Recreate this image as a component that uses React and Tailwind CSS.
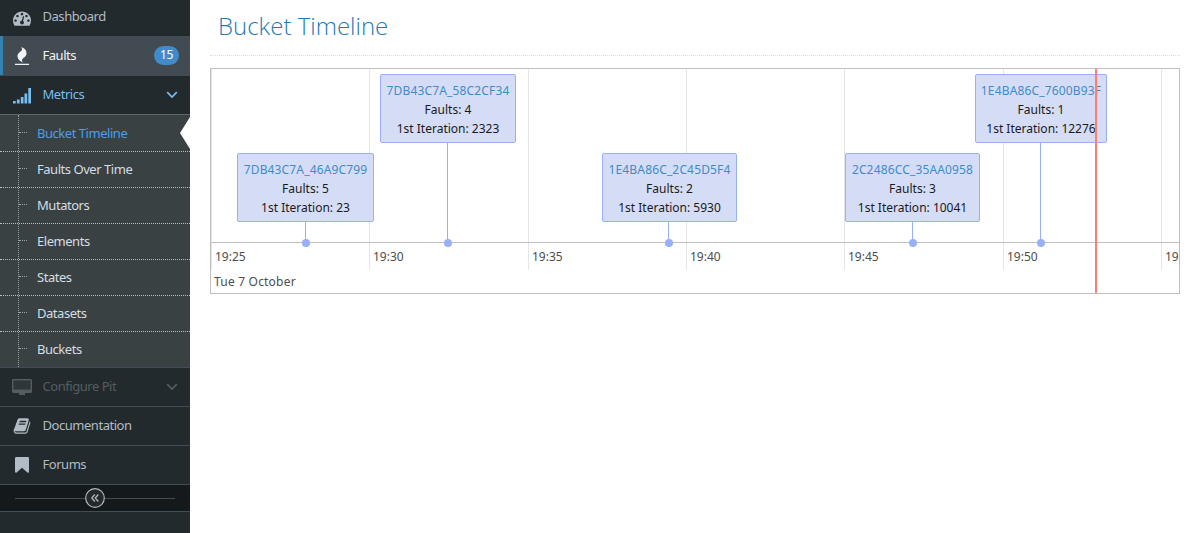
import React from "react";

const DASHBOARD =
  "M384 1152q0-53-37.5-90.5t-90.5-37.5-90.5 37.5-37.5 90.5 37.5 90.5 90.5 37.5 90.5-37.5 37.5-90.5zm192-448q0-53-37.5-90.5t-90.5-37.5-90.5 37.5-37.5 90.5 37.5 90.5 90.5 37.5 90.5-37.5 37.5-90.5zm428 481l101-382q6-26-7.5-48.5t-38.5-29.5-48 6.5-30 39.5l-101 382q-60 5-107 43.5t-63 98.5q-20 77 20 146t117 89 146-20 89-117q16-60-6-117t-72-91zm660-33q0-53-37.5-90.5t-90.5-37.5-90.5 37.5-37.5 90.5 37.5 90.5 90.5 37.5 90.5-37.5 37.5-90.5zm-640-640q0-53-37.5-90.5t-90.5-37.5-90.5 37.5-37.5 90.5 37.5 90.5 90.5 37.5 90.5-37.5 37.5-90.5zm448 192q0-53-37.5-90.5t-90.5-37.5-90.5 37.5-37.5 90.5 37.5 90.5 90.5 37.5 90.5-37.5 37.5-90.5zm320 448q0 261-141 483-19 29-54 29h-1402q-35 0-54-29-141-221-141-483 0-182 71-348t191-286 286-191 348-71 348 71 286 191 191 286 71 348z";
const FIRE =
  "M1600 1696v64q0 13-9.5 22.5t-22.5 9.5h-1344q-13 0-22.5-9.5t-9.5-22.5v-64q0-13 9.5-22.5t22.5-9.5h1344q13 0 22.5 9.5t9.5 22.5zm-256-1056q0 78-24.5 144t-64 112.5-87.5 88-96 77.5-87.5 72-64 81.5-24.5 96.5q0 96 67 224l-4-1 1 1q-90-41-160-83t-138.5-100-113.5-122.5-72.5-150.5-27.5-184q0-78 24.5-144t64-112.5 87.5-88 96-77.5 87.5-72 64-81.5 24.5-96.5q0-94-66-224l3 1-1-1q90 41 160 83t138.5 100 113.5 122.5 72.5 150.5 27.5 184z";
const BOOK =
  "M1703 478q40 57 18 129l-275 906q-19 64-76.5 107.5t-122.5 43.5h-923q-77 0-148.5-53.5t-99.5-131.5q-24-67-2-127 0-4 3-27t4-37q1-8-3-21.5t-3-19.5q2-11 8-21t16.5-23.5 16.5-23.5q23-38 45-91.5t30-91.5q3-10 .5-30t-.5-28q3-11 17-28t17-23q21-36 42-92t25-90q1-9-2.5-32t.5-28q4-13 22-30.5t22-22.5q19-26 42.5-84.5t27.5-96.5q1-8-3-25.5t-2-26.5q2-8 9-18t18-23 17-21q8-12 16.5-30.5t15-35 16-36 19.5-32 26.5-23.5 36-11.5 47.5 5.5l-1 3q38-9 51-9h761q74 0 114 56t18 130l-274 906q-36 119-71.5 153.5t-128.5 34.5h-869q-27 0-38 15-11 16-1 43 24 70 144 70h923q29 0 56-15.5t35-41.5l300-987q7-22 5-57 38 15 59 43zm-1064 2q-4 13 2 22.5t20 9.5h608q13 0 25.5-9.5t16.5-22.5l21-64q4-13-2-22.5t-20-9.5h-608q-13 0-25.5 9.5t-16.5 22.5zm-83 256q-4 13 2 22.5t20 9.5h608q13 0 25.5-9.5t16.5-22.5l21-64q4-13-2-22.5t-20-9.5h-608q-13 0-25.5 9.5t-16.5 22.5z";

function Glyph({ d }) {
  return (
    <svg viewBox="0 0 1792 1792" className="h-[18px] w-[18px]" fill="currentColor">
      <path d={d} />
    </svg>
  );
}

function Signal() {
  return (
    <svg viewBox="0 0 20 18" className="h-[18px] w-5" fill="currentColor">
      <path d="M1 15h2.700v2.500h-2.700zM4.900 13.500h2.700v4h-2.700zM8.800 11h2.700v6.500h-2.700zM12.500 7.500h2.700v10h-2.700zM16.300 2h2.700v15.500h-2.700z" />
    </svg>
  );
}

function Desktop() {
  return (
    <svg viewBox="0 0 20 18" className="h-[18px] w-5" fill="currentColor">
      <path
        fillRule="evenodd"
        d="M1.500 1h17a1.500 1.500 0 0 1 1.500 1.500v11a1.500 1.500 0 0 1-1.500 1.500H13v1.500q0 .5-.5.5h-5q-.5 0-.5-.5V15H1.500A1.500 1.500 0 0 1 0 13.500v-11A1.500 1.500 0 0 1 1.500 1zM1.500 2.500v9h17v-9z"
      />
      <path d="M1.500 2.500h17v9h-17z" fillOpacity="0.250" />
    </svg>
  );
}

function Bookmark() {
  return (
    <svg viewBox="0 0 14 16" className="h-4 w-[14px]" fill="currentColor">
      <path d="M1.300 0h11.400q1.300 0 1.300 1.300v13.400q0 1.300-1.300 1.100L7 10.800 1.300 15.800Q0 16 0 14.700V1.300Q0 0 1.300 0z" />
    </svg>
  );
}

function Chevron() {
  return (
    <svg viewBox="0 0 12 8" className="h-2 w-3" fill="none" stroke="currentColor" strokeWidth="1.700">
      <path d="M1.200 1.200 6 6l4.800-4.800" />
    </svg>
  );
}

function Item({ icon, label, tone, right, height = "h-[39px]", border = "border-b border-[#414e55]", pad = "pb-0.5" }) {
  return (
    <a className={`flex w-full items-center ${height} ${border} ${tone}`}>
      <span className="flex w-11 shrink-0 justify-center">{icon}</span>
      <span className={`-ml-[1.5px] grow ${pad}`}>{label}</span>
      {right}
    </a>
  );
}

const metrics = ["Bucket Timeline", "Faults Over Time", "Mutators", "Elements", "States", "Datasets", "Buckets"];

function Sidebar() {
  return (
    <nav className="flex h-[533px] w-[190px] shrink-0 flex-col bg-[#222a2d] text-[13px] leading-5 tracking-[-0.46px]">
      <Item height="h-9" border="" pad="pb-1" tone="text-[#b2bcc4]" icon={<Glyph d={DASHBOARD} />} label="Dashboard" />
      <div className="flex h-10 bg-[#434b52]">
        <div className="h-[39px] w-[3px] shrink-0 bg-[#3382af]" />
        <div className="-ml-[3px] flex grow">
          <Item
            border=""
            tone="text-[#f0f3f5]"
            icon={<Glyph d={FIRE} />}
            label="Faults"
            right={
              <span className="mr-[11px] h-[19px] w-[25px] rounded-full bg-[#428bca] text-center text-xs leading-[18px] text-white">
                15
              </span>
            }
          />
        </div>
      </div>
      <Item
        tone="text-[#76bff0]"
        border="border-b border-[#5b6668]"
        icon={<Signal />}
        label="Metrics"
        right={<span className="mr-3"><Chevron /></span>}
      />
      <div className="flex h-[252px] flex-col bg-[#3a4143]">
        {metrics.map((name, i) => (
          <a
            key={name}
            className={`flex items-center ${i === 0 ? "h-[37px]" : i === 6 ? "h-[35px]" : "h-9"} ${
              i < 6 ? "border-b border-dotted border-[#b4bfc1]" : ""
            } ${i === 0 ? "text-[#4f9ee0]" : "text-[#d5dde2]"}`}
          >
            <span className="ml-[18px] h-full w-px border-l border-dotted border-[#98a3a6]" />
            <span className="mb-0.5 w-2 border-t border-dotted border-[#98a3a6]" />
            <span className={`ml-2.5 grow ${i === 0 ? "" : i === 6 ? "pb-0.5" : "pb-px"}`}>{name}</span>
            {i === 0 && (
              <svg viewBox="0 0 10 32" className="h-8 w-2.5" fill="#fff">
                <path d="M10 0v32L0 16z" />
              </svg>
            )}
          </a>
        ))}
      </div>
      <Item
        height="h-10"
        border="border-y border-[#414e55]"
        tone="text-[#555d61]"
        icon={<Desktop />}
        label="Configure Pit"
        right={<span className="mr-3"><Chevron /></span>}
      />
      <Item tone="text-[#b2bcc4]" icon={<Glyph d={BOOK} />} label="Documentation" />
      <Item tone="text-[#b2bcc4]" icon={<Bookmark />} label="Forums" />
      <div className="flex h-[27px] items-center border-b border-[#414e55] bg-[#141a1c] px-[15px]">
        <div className="h-px grow bg-[#414e55]" />
        <svg viewBox="0 0 20 20" className="h-5 w-5" fill="none" stroke="#b2b8bc">
          <circle cx="10" cy="10" r="9.300" fill="#222a2d" strokeWidth="1.200" />
          <path d="M9.800 6.500 6.800 10l3 3.500M13.300 6.500 10.300 10l3 3.500" strokeWidth="1.300" />
        </svg>
        <div className="h-px grow bg-[#414e55]" />
      </div>
    </nav>
  );
}

const ticks = [
  { x: 0, t: "19:25" },
  { x: 158, t: "19:30" },
  { x: 317, t: "19:35" },
  { x: 475, t: "19:40" },
  { x: 633, t: "19:45" },
  { x: 792, t: "19:50" },
  { x: 950, t: "19" },
];

const events = [
  { id: "7DB43C7A_46A9C799", n: 5, it: 23, left: 26, top: 84, w: 137, dot: 95 },
  { id: "7DB43C7A_58C2CF34", n: 4, it: 2323, left: 169, top: 5, w: 136, dot: 237 },
  { id: "1E4BA86C_2C45D5F4", n: 2, it: 5930, left: 391, top: 84, w: 135, dot: 458 },
  { id: "2C2486CC_35AA0958", n: 3, it: 10041, left: 634, top: 84, w: 135, dot: 702 },
  { id: "1E4BA86C_7600B93F", n: 1, it: 12276, left: 764, top: 5, w: 132, dot: 830 },
];

function Timeline() {
  return (
    <div className="relative h-[226px] w-[970px] overflow-hidden border border-[#bfbfbf] text-xs leading-[19px] text-[#4d4d4d]">
      {ticks.map(({ x, t }) => (
        <div key={t} className="absolute top-0 h-[201px] border-l border-[#e5e5e5] pt-[178px] pl-[3px]" style={{ left: x }}>
          {t}
        </div>
      ))}
      <div className="absolute top-[203px] left-[3px] tracking-[0.2px]">Tue 7 October</div>
      <div className="absolute top-[173px] left-0 h-px w-full bg-[#bfbfbf]" />
      {events.map((e) => (
        <React.Fragment key={e.id}>
          <div className="absolute w-px bg-[#97b0f8]" style={{ left: e.dot - 1, top: e.top + 69, height: 104 - e.top }} />
          <div className="absolute top-[170px] h-2 w-2 rounded-full bg-[#97b0f8]" style={{ left: e.dot - 4 }} />
          <div
            className="absolute flex h-[69px] flex-col items-center rounded-[2px] border border-[#97b0f8] bg-[#d5ddf6] pt-[6px] whitespace-nowrap text-[#1a1a1a]"
            style={{ left: e.left, top: e.top, width: e.w }}
          >
            <div className="tracking-[0.15px] text-[#428bca]">{e.id}</div>
            <div>Faults: {e.n}</div>
            <div>1st Iteration: {e.it}</div>
          </div>
        </React.Fragment>
      ))}
      <div className="absolute top-0 left-[884px] h-full w-0.5 bg-[#ff7f6e]" />
    </div>
  );
}

export default function App() {
  return (
    <div className="flex h-[533px] w-[1200px] overflow-hidden bg-white font-['Noto_Sans','Open_Sans',sans-serif]">
      <Sidebar />
      <main className="flex grow flex-col pl-5">
        <header className="mb-3 h-14 w-[970px] border-b border-dotted border-[#dcdcdc] pt-2 pl-2">
          <h1 className="font-['Open_Sans',sans-serif] text-2xl leading-9 font-light text-[#2679b5]">Bucket Timeline</h1>
        </header>
        <Timeline />
      </main>
    </div>
  );
}
